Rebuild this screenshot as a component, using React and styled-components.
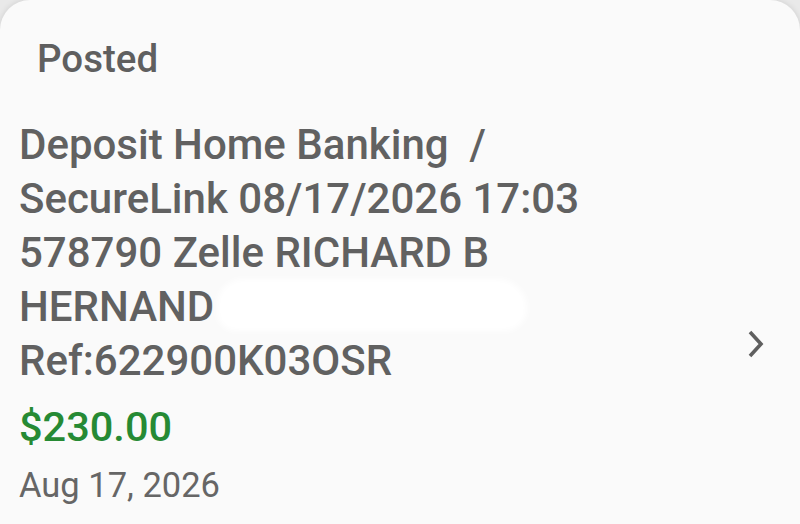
import React from 'react';
import styled, { createGlobalStyle } from 'styled-components';

const GlobalStyle = createGlobalStyle`
  html, body {
    margin: 0;
    padding: 0;
    background: #e9e9e9;
  }
  body {
    font-family: Roboto, "Noto Sans", sans-serif;
  }
`;

const Card = styled.div`
  position: relative;
  width: 800px;
  height: 524px;
  box-sizing: border-box;
  background: #fafafa;
  border-radius: 30px 30px 0 0;
  box-shadow: 0 0 6px rgba(0, 0, 0, 0.12);
  padding: 37px 0 0 19px;
  overflow: hidden;
`;

const Status = styled.div`
  font-size: 38.5px;
  font-weight: 500;
  color: #5f5f5f;
  padding-left: 18px;
  line-height: 44px;
`;

const Row = styled.div`
  display: flex;
  margin-top: 37px;
`;

const Body = styled.div`
  flex: 1;
  position: relative;
`;

const Description = styled.div`
  font-size: 42px;
  font-weight: 500;
  color: #616161;
  line-height: 54px;
  white-space: pre-wrap;
`;

const Amount = styled.div`
  font-size: 41.5px;
  font-weight: 500;
  color: #268a34;
  line-height: 54px;
  margin-top: 12px;
`;

const DateText = styled.div`
  font-size: 34.5px;
  font-weight: 400;
  color: #666666;
  line-height: 48px;
  margin-top: 7px;
`;

const Chevron = styled.div`
  width: 40px;
  margin-right: 24px;
  display: flex;
  justify-content: center;
  margin-top: 212px;
`;

const Redaction = styled.div`
  position: absolute;
  left: 198px;
  top: 161px;
  width: 310px;
  height: 52px;
  background: #ffffff;
  border-radius: 30px 34px 26px 22px;
  filter: blur(3px);
`;

export default function App() {
  return (
    <>
      <GlobalStyle />
      <Card>
        <Status>Posted</Status>
        <Row>
          <Body>
            <Description>
              {'Deposit Home Banking  /\nSecureLink 08/17/2026 17:03\n578790 Zelle RICHARD B\nHERNAND\nRef:622900K03OSR'}
            </Description>
            <Redaction />
            <Amount>$230.00</Amount>
            <DateText>Aug 17, 2026</DateText>
          </Body>
          <Chevron>
            <svg width="20" height="28" viewBox="0 0 20 28" fill="none">
              <path d="M4 2 L15 14 L4 26" stroke="#5f5f5f" strokeWidth="3.6" />
            </svg>
          </Chevron>
        </Row>
      </Card>
    </>
  );
}
